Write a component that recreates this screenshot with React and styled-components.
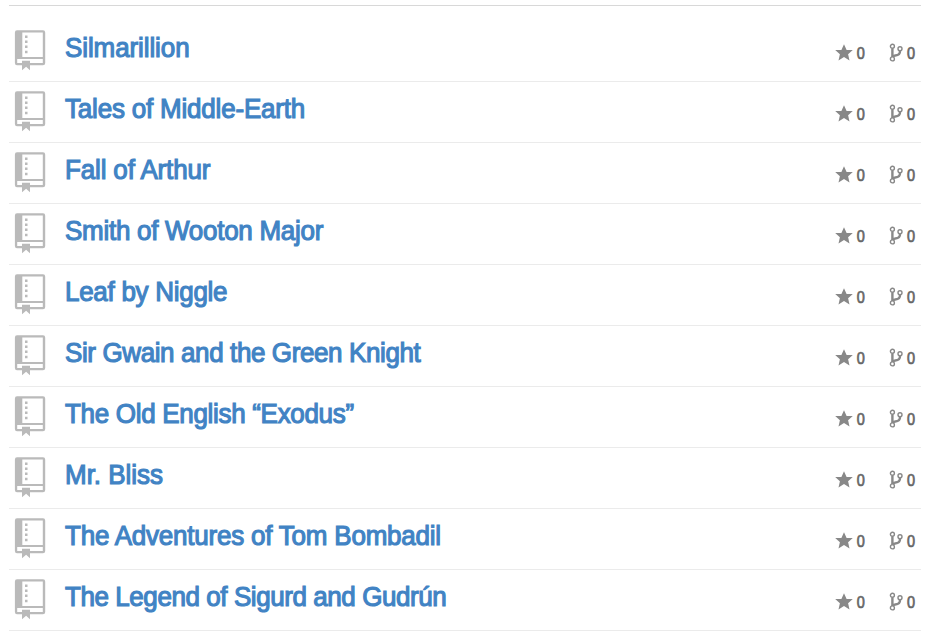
import React from "react";
import styled, { createGlobalStyle } from "styled-components";

const GlobalStyle = createGlobalStyle`
  body { margin: 0; background: #fff; font-family: "Liberation Sans", Arial, sans-serif; }
`;
const List = styled.ul`
  list-style: none;
  margin: 5px 7px 0 9px;
  padding: 15px 0 0;
  border-top: 1px solid #d8d8d8;
`;
const Row = styled.li`
  display: flex;
  box-sizing: border-box;
  height: 61px;
  padding: 9px 6px 0 5px;
  border-bottom: 1px solid #ebebeb;
`;
const RepoSvg = styled.svg`
  flex: none;
  width: 32px;
  height: 42px;
  color: #bababa;
`;
const Title = styled.a`
  flex: 1;
  height: 36px;
  margin-left: 19px;
  color: #4183c4;
  font-size: 26px;
  line-height: 36px;
  letter-spacing: ${(p) => p.$spacing}px;
  -webkit-text-stroke: 1.1px #4183c4;
  white-space: nowrap;
  transform: scaleY(1.05);
`;
const Stats = styled.div`
  display: flex;
  height: 20px;
  padding-top: 13px;
  gap: 24px;
`;
const Stat = styled.span`
  display: flex;
  align-items: center;
`;
const Count = styled.span`
  padding-top: 2px;
  color: #666;
  font-size: 14.5px;
  line-height: 20px;
  -webkit-text-stroke: 0.6px #666;
  transform: scaleY(1.08);
`;
const StatSvg = styled.svg`
  width: ${(p) => p.$width}px;
  height: 20px;
  margin-right: 4px;
  color: #888;
`;

const RepoIcon = () => (
  <RepoSvg viewBox="0 0 32 42">
    <path
      fill="currentColor"
      fillRule="evenodd"
      d="M3 0.2H29Q31.2 0.2 31.2 2.4V33Q31.2 35.2 29 35.2H16V40.2L12.1 36.8L8 40.2V35.2H3Q0.9 35.2 0.9 33V2.4Q0.9 0.2 3 0.2ZM8.3 2.4V26.9H28.8V2.4ZM3.2 29.1V32.9H8V30.7H16V32.9H28.8V29.1Z"
    />
    <path fill="currentColor" d="M11 5.4h2.5v2.5H11zM11 10.5h2.5V13H11zM11 15.6h2.5v2.5H11zM11 20.7h2.5v2.5H11z" />
  </RepoSvg>
);
const StarIcon = () => (
  <StatSvg viewBox="0 0 18 20" $width={18}>
    <path fill="currentColor" d="M9 1.2L11.6 7H17.8L13.1 11.2L14.5 17.4L9 14L3.5 17.4L4.9 11.2L0.2 7H6.4Z" />
  </StatSvg>
);
const ForkIcon = () => (
  <StatSvg viewBox="0 0 14 20" $width={14}>
    <g fill="none" stroke="currentColor">
      <path strokeWidth="2.4" d="M3.4 5.5V14.5M11 8C11.2 11.9 8.6 12.2 6.2 12.5Q3.9 12.8 3.5 14.5" />
      <g fill="#fff" strokeWidth="1.4">
        <circle cx="3.4" cy="3.3" r="2" />
        <circle cx="11" cy="5.8" r="2" />
        <circle cx="3.4" cy="15.9" r="2" />
      </g>
    </g>
  </StatSvg>
);

const repos = [
  ["Silmarillion", -0.1],
  ["Tales of Middle-Earth", -0.2],
  ["Fall of Arthur", -0.15],
  ["Smith of Wooton Major", -0.28],
  ["Leaf by Niggle", -0.28],
  ["Sir Gwain and the Green Knight", -0.39],
  ["The Old English “Exodus”", -0.31],
  ["Mr. Bliss", -0.03],
  ["The Adventures of Tom Bombadil", -0.22],
  ["The Legend of Sigurd and Gudrún", -0.43],
];

export default function App() {
  return (
    <>
      <GlobalStyle />
      <List>
        {repos.map(([name, spacing]) => (
          <Row key={name}>
            <RepoIcon />
            <Title $spacing={spacing}>{name}</Title>
            <Stats>
              <Stat><StarIcon /><Count>0</Count></Stat>
              <Stat><ForkIcon /><Count>0</Count></Stat>
            </Stats>
          </Row>
        ))}
      </List>
    </>
  );
}
